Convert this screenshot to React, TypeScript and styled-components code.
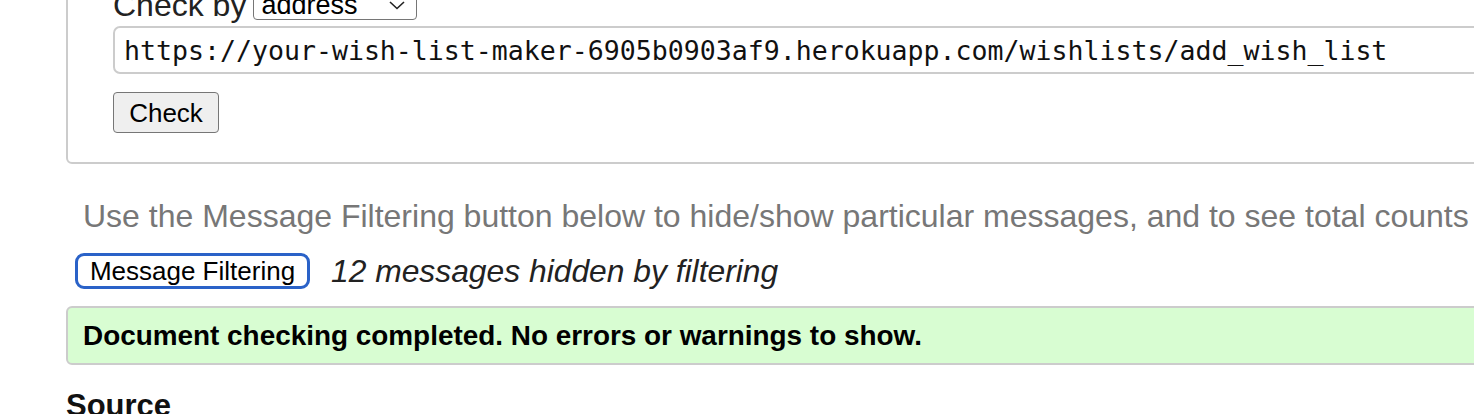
import React from "react";
import styled, { createGlobalStyle } from "styled-components";

const Global = createGlobalStyle`
  html, body { margin: 0; padding: 0; background: #fff; overflow: hidden; }
  body { font-family: "Liberation Sans", Arial, Helvetica, sans-serif; color: #222; }
`;

const Page = styled.main`
  width: 1560px;
  margin-top: -40px;
  padding-left: 66px;
  box-sizing: border-box;
`;

const Form = styled.fieldset`
  margin: 0;
  border: 2px solid #cccccc;
  border-radius: 6px;
  padding: 28px 0 29px 45px;
  display: flex;
  flex-direction: column;
  align-items: flex-start;
`;

const CheckByRow = styled.div`
  display: flex;
  align-items: flex-end;
  gap: 7px;
  height: 30px;
  font-size: 32px;
  line-height: 30px;
  color: #222;
`;

const Select = styled.div`
  box-sizing: border-box;
  width: 164px;
  height: 31px;
  border: 1.5px solid #767676;
  border-radius: 4px;
  display: flex;
  align-items: center;
  justify-content: space-between;
  padding: 0 10px 0 7px;
  font-size: 27px;
  color: #000;
  background: #fff;
`;

const UrlInput = styled.div`
  box-sizing: border-box;
  margin-top: 6px;
  width: 1420px;
  height: 48px;
  border: 2px solid #cccccc;
  border-radius: 7px;
  display: flex;
  align-items: center;
  padding-left: 9px;
  font-family: "DejaVu Sans Mono", "Liberation Mono", monospace;
  font-size: 26.57px;
  color: #111;
  white-space: nowrap;
`;

const Button = styled.button<{ $focused?: boolean }>`
  box-sizing: border-box;
  font-family: "Liberation Sans", Arial, sans-serif;
  font-size: 26px;
  color: #000;
  background: ${(p) => (p.$focused ? "#fff" : "#efefef")};
  border: ${(p) => (p.$focused ? "3px solid #2a62c8" : "1.5px solid #767676")};
  border-radius: ${(p) => (p.$focused ? "9px" : "4px")};
  padding: 0 ${(p) => (p.$focused ? "10px" : "14px")};
  line-height: 1;
  display: inline-flex;
  align-items: center;
`;

const CheckButton = styled(Button)`
  margin-top: 18px;
  height: 41px;
  width: 106px;
  justify-content: center;
`;

const Hint = styled.p`
  margin: 34px 0 0 17px;
  font-size: 32px;
  line-height: 36px;
  color: #777;
  white-space: nowrap;
`;

const FilterRow = styled.div`
  margin: 19px 0 0 9px;
  display: flex;
  align-items: center;
  gap: 21px;
  height: 36px;
`;

const FilterButton = styled(Button)`
  height: 36px;
  width: 235px;
  justify-content: center;
  padding: 0;
`;

const HiddenNote = styled.span`
  font-style: italic;
  font-size: 31.8px;
  color: #222;
  white-space: nowrap;
`;

const Success = styled.div`
  box-sizing: border-box;
  margin-top: 17px;
  width: 1500px;
  height: 59px;
  background: #d8fdd2;
  border: 2px solid #cccccc;
  border-radius: 6px;
  display: flex;
  align-items: center;
  padding-left: 15px;
  font-weight: bold;
  font-size: 27.9px;
  color: #000;
  white-space: nowrap;
`;

const Heading = styled.h2`
  margin: 23px 0 0;
  font-size: 31px;
  line-height: 36px;
  font-weight: bold;
  color: #111;
`;

const Chevron = () => (
  <svg width="18" height="12" viewBox="0 0 18 12" fill="none" stroke="#222" strokeWidth="1.6">
    <path d="M2 3 L9 9.5 L16 3" />
  </svg>
);

export default function App() {
  return (
    <>
      <Global />
      <Page>
        <Form>
          <CheckByRow>
            <span>Check by</span>
            <Select>
              <span>address</span>
              <Chevron />
            </Select>
          </CheckByRow>
          <UrlInput>https://your-wish-list-maker-6905b0903af9.herokuapp.com/wishlists/add_wish_list</UrlInput>
          <CheckButton>Check</CheckButton>
        </Form>
        <Hint>Use the Message Filtering button below to hide/show particular messages, and to see total counts</Hint>
        <FilterRow>
          <FilterButton $focused>Message Filtering</FilterButton>
          <HiddenNote>12 messages hidden by filtering</HiddenNote>
        </FilterRow>
        <Success>Document checking completed. No errors or warnings to show.</Success>
        <Heading>Source</Heading>
      </Page>
    </>
  );
}
